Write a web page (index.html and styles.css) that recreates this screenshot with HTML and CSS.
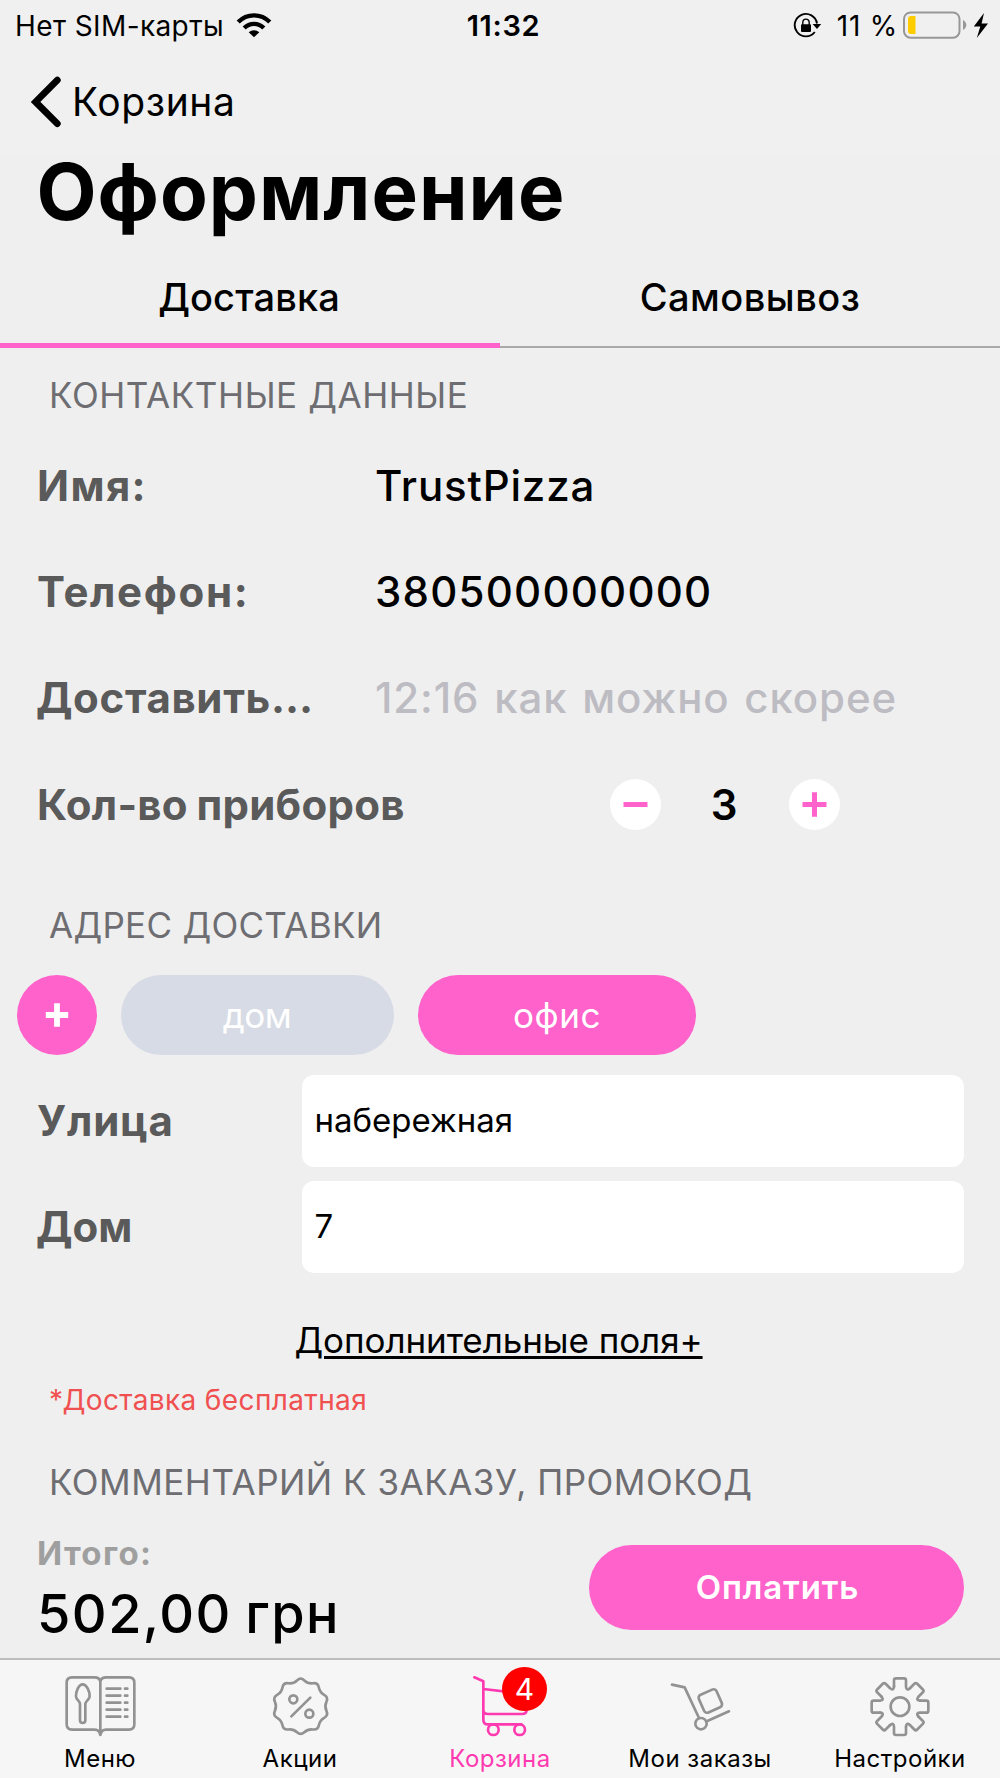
FILE: index.html
```html
<!DOCTYPE html>
<html lang="ru">
<head>
<meta charset="utf-8">
<title>Оформление</title>
<link rel="stylesheet" href="styles.css">
</head>
<body>
<div class="screen">
  <header class="top">
    <div class="status">
      <div class="status-left">
        <span class="carrier">Нет SIM-карты</span>
        <svg class="wifi" viewBox="236 11 36 26" width="36" height="26"><path d="M238.2 21A22 22 0 0 1 269.8 21M244.2 27A13.6 13.6 0 0 1 263.8 27" fill="none" stroke="#000" stroke-width="4.3"/><path d="M248.7 31.2A8 8 0 0 1 259.3 31.2L254 36.2Z"/></svg>
      </div>
      <span class="clock">11:32</span>
      <div class="status-right">
        <svg viewBox="792 11 30 26" width="30" height="26"><path d="M817 22.5A11.2 11.2 0 1 0 814.8 31" fill="none" stroke="#000" stroke-width="1.9"/><path d="M812.6 23H821.2L817 28Z"/><rect x="801" y="23.2" width="10" height="7.8" rx="1"/><path d="M802.8 24V21.5A3.2 3.4 0 0 1 809.2 21.5V24" fill="none" stroke="#000" stroke-width="1.4"/></svg>
        <span class="charge">11 %</span>
        <svg viewBox="902 9 88 30" width="88" height="30"><rect x="904" y="11.5" width="55.5" height="25.2" rx="6.5" fill="none" stroke="#979797" stroke-width="2"/><path d="M911 15H915.5V33H911Q908 33 908 30V18Q908 15 911 15Z" fill="#fc0"/><path d="M963 19Q966.3 21 966.3 24T963 29Z" fill="#979797"/><path d="M984 12L973.8 25.6H980.3L976.8 37L988 22.4H981.6Z"/></svg>
      </div>
    </div>
    <nav class="nav">
      <svg viewBox="30 74 34 56" width="34" height="56"><path d="M57.3 80.2L35.6 101.9L57.3 123.6" fill="none" stroke="#000" stroke-width="6.8" stroke-linecap="round"/></svg>
      <span class="back">Корзина</span>
    </nav>
  </header>
  <main class="content">
    <h1 class="title">Оформление</h1>
    <div class="modes">
      <div class="mode mode-active">Доставка</div>
      <div class="mode mode-pickup">Самовывоз</div>
    </div>

    <h2 class="section section-contact">КОНТАКТНЫЕ ДАННЫЕ</h2>
    <div class="row"><span class="label name">Имя:</span><span class="value trust">TrustPizza</span></div>
    <div class="row"><span class="label phone">Телефон:</span><span class="value digits">380500000000</span></div>
    <div class="row"><span class="label when">Доставить…</span><span class="value hint">12:16 как можно скорее</span></div>
    <div class="row">
      <span class="label count">Кол-во приборов</span>
      <div class="stepper">
        <svg class="step" viewBox="-25.5 -25.5 51 51"><path d="M-12 0H12" stroke="#ff62cb" stroke-width="5"/></svg>
        <span class="qty">3</span>
        <svg class="step" viewBox="-25.5 -25.5 51 51"><path d="M-12 0H12M0 -12.3V12.3" stroke="#ff62cb" stroke-width="5"/></svg>
      </div>
    </div>

    <h2 class="section section-address">АДРЕС ДОСТАВКИ</h2>
    <div class="chips">
      <div class="chip chip-add"><svg viewBox="-12 -12 24 24" width="24" height="24"><path d="M-11.2 0H11.2M0 -11.7V11.7" stroke="#fff" stroke-width="5.8"/></svg></div>
      <div class="chip chip-home">дом</div>
      <div class="chip chip-office">офис</div>
    </div>
    <div class="field"><span class="label street">Улица</span><div class="input">набережная</div></div>
    <div class="field"><span class="label house">Дом</span><div class="input">7</div></div>
    <div class="more"><a class="more-link">Дополнительные поля+</a></div>
    <p class="note">*Доставка бесплатная</p>
    <h2 class="section section-comment">КОММЕНТАРИЙ К ЗАКАЗУ, ПРОМОКОД</h2>
  </main>
  <section class="checkout">
    <div class="total"><span class="total-label">Итого:</span><span class="total-sum">502,00 грн</span></div>
    <div class="pay">Оплатить</div>
  </section>
  <footer class="tabbar">
    <div class="tab">
      <svg class="icon" viewBox="180 520 240 195"><path d="M301 545Q298 533 284 533H216Q200 533 200 549V674Q200 690 216 690H284Q298 690 301 706Q304 690 318 690H387Q403 690 403 674V549Q403 533 387 533H318Q304 533 301 545V706M248 554C236 554 228 575 228 590C228 600 240 604 240 613V662Q240 670 248 670Q256 670 256 662V613C256 604 269 600 269 590C269 575 260 554 248 554ZM320 567H361M320 588H361M320 609H361M320 630H361M320 651H361M375 567H382M375 588H382M375 609H382M375 630H382M375 651H382"/></svg>
      <span class="tab-name">Меню</span>
    </div>
    <div class="tab">
      <svg class="icon" viewBox="780 520 240 195"><path d="M891.05 542.25Q902 532 912.95 542.25Q923.9 552.5 938.8 550.65Q953.7 548.8 956.55 563.55Q959.4 578.3 972.55 585.55Q985.7 592.8 979.35 606.4Q973 620 979.35 633.6Q985.7 647.2 972.55 654.45Q959.4 661.7 956.55 676.45Q953.7 691.2 938.8 689.35Q923.9 687.5 912.95 697.75Q902 708 891.05 697.75Q880.1 687.5 865.2 689.35Q850.3 691.2 847.45 676.45Q844.6 661.7 831.45 654.45Q818.3 647.2 824.65 633.6Q831 620 824.65 606.4Q818.3 592.8 831.45 585.55Q844.6 578.3 847.45 563.55Q850.3 548.8 865.2 550.65Q880.1 552.5 891.05 542.25ZM931 594L874 650"/><circle cx="880" cy="599" r="12"/><circle cx="928" cy="642" r="12"/></svg>
      <span class="tab-name promo">Акции</span>
    </div>
    <div class="tab tab-active">
      <svg class="icon" viewBox="300 520 240 195"><path d="M343 533L370 545V660Q370 674 384 674H484M370 568L500 583V630Q500 643 486 643H384Q370 643 370 630"/><circle cx="400" cy="690" r="16"/><circle cx="479" cy="690" r="16"/></svg>
      <span class="badge">4</span>
      <span class="tab-name">Корзина</span>
    </div>
    <div class="tab">
      <svg class="icon" viewBox="60 520 240 195"><path d="M96 555L134 563L177 655M202 664L267 635"/><circle cx="183" cy="672" r="17"/><rect x="182" y="575" width="58" height="58" rx="10" transform="rotate(-24 211 604)"/></svg>
      <span class="tab-name">Мои заказы</span>
    </div>
    <div class="tab">
      <svg class="icon" viewBox="660 520 240 195"><defs><path id="tooth" d="M-18 -60V-79Q-18 -85 -12 -85H12Q18 -85 18 -79V-60Q19.1 -46.2 29.7 -55.2"/></defs><g transform="translate(780 621)"><use href="#tooth"/><use href="#tooth" transform="rotate(45)"/><use href="#tooth" transform="rotate(90)"/><use href="#tooth" transform="rotate(135)"/><use href="#tooth" transform="rotate(180)"/><use href="#tooth" transform="rotate(225)"/><use href="#tooth" transform="rotate(270)"/><use href="#tooth" transform="rotate(315)"/><circle r="28"/></g></svg>
      <span class="tab-name">Настройки</span>
    </div>
  </footer>
</div>
</body>
</html>
```
FILE: styles.css
```css
* { box-sizing: border-box; }
body { margin: 0; background: #efefef; color: #000; font-family: Inter, "Liberation Sans", sans-serif; }
h1, h2, p { margin: 0; }
svg { display: block; flex: none; }
span, .mode, .chip, .input, .pay, .section, .title { white-space: nowrap; }

.screen { width: 1000px; height: 1778px; display: flex; flex-direction: column; overflow: hidden; background: #efefef; }

.top { flex: none; background: #f0f0f0; }
.status { height: 50px; display: grid; grid-template-columns: 1fr auto 1fr; align-items: center; font-size: 28px; line-height: 34px; padding: 2px 10px 0 15px; }
.status-left, .status-right { display: flex; align-items: center; }
.carrier { letter-spacing: .4px; width: 221px; }
.wifi { margin-top: -3px; }
.clock { font-size: 29px; font-weight: 600; letter-spacing: .69px; padding-left: 2px; }
.status-right { justify-content: flex-end; }
.status-right svg { margin-top: -3px; }
.charge { letter-spacing: .78px; margin: 0 4px 0 15px; }
.nav { height: 104px; display: flex; align-items: center; padding-left: 30px; gap: 8px; }
.back { font-size: 39px; line-height: 50px; letter-spacing: .61px; }

.content { flex: none; height: 1366px; }
.title { height: 75px; line-height: 75px; font-size: 78px; font-weight: 700; letter-spacing: 1px; padding-left: 36.5px; }
.modes { display: flex; height: 97px; margin-top: 22px; }
.mode { width: 500px; font-size: 38px; font-weight: 500; line-height: 92px; text-align: center; letter-spacing: .14px; border-bottom: 2px solid #a9a9a9; }
.mode-active { border-bottom: 5px solid #ff62cb; padding-right: 2px; }
.mode-pickup { letter-spacing: .47px; }

.section { color: #6d6d72; font-size: 35px; font-weight: 400; padding-left: 49px; }
.section-contact { margin-top: 10px; line-height: 75px; letter-spacing: .58px; }
.section-address { padding: 18px 0 0 49px; line-height: 101px; height: 117px; letter-spacing: .3px; }
.section-comment { margin-top: 25px; line-height: 75px; letter-spacing: .5px; }

.row { display: flex; align-items: center; height: 106px; padding-left: 37px; font-size: 42px; line-height: 56px; }
.label { color: #5a5a5a; font-size: 42px; font-weight: 700; width: 338px; flex: none; }
.name { letter-spacing: 1.4px; }
.phone { letter-spacing: 1.65px; }
.when { letter-spacing: .66px; text-indent: -1px; }
.count { letter-spacing: .25px; word-spacing: -1.5px; width: 573px; padding-top: 2px; }
.value { font-weight: 500; }
.trust { letter-spacing: .83px; }
.digits { letter-spacing: 1.22px; }
.hint { color: #bdbcc3; letter-spacing: .9px; word-spacing: 2.7px; }
.stepper { display: flex; align-items: center; justify-content: space-between; width: 230px; }
.step { width: 51px; height: 51px; border-radius: 50%; background: #fff; }
.qty { font-weight: 600; padding: 2px 2px 0 0; }

.chips { display: flex; gap: 24px; padding-left: 17px; margin-top: 1px; }
.chip { height: 80px; border-radius: 40px; color: #fff; background: #ff62cb; font-size: 35px; line-height: 80px; display: flex; align-items: center; justify-content: center; }
.chip-add { width: 80px; }
.chip-home { width: 273px; background: #d7dbe5; letter-spacing: -.4px; padding-right: 1px; }
.chip-office { width: 278px; letter-spacing: .5px; }

.field { display: flex; align-items: center; padding-left: 37px; margin-top: 14px; }
.chips + .field { margin-top: 20px; }
.field .label { width: 265px; line-height: 56px; }
.street { letter-spacing: .8px; }
.house { text-indent: -1px; }
.input { width: 662px; height: 92px; border-radius: 12px; background: #fff; font-size: 33px; line-height: 90px; padding-left: 12.5px; }
.more { margin-top: 45px; padding-right: 3px; text-align: center; line-height: 45px; font-size: 35px; }
.more-link { letter-spacing: -.07px; text-decoration: underline; text-decoration-thickness: 2.5px; text-underline-offset: 3px; }
.note { margin-top: 17px; padding-left: 49px; font-size: 28px; line-height: 40px; letter-spacing: .37px; color: #f05050; }

.checkout { flex: none; height: 138px; display: flex; justify-content: space-between; padding: 0 36px 0 37px; }
.total { display: flex; flex-direction: column; }
.total-label { margin-top: 13px; font-size: 33px; font-weight: 700; line-height: 40px; letter-spacing: 1.34px; color: #9f9f9f; }
.total-sum { margin-top: 10px; font-size: 54px; font-weight: 500; line-height: 62px; letter-spacing: 1.45px; word-spacing: -2.5px; }
.pay { width: 375px; height: 85px; margin-top: 25px; border-radius: 43px; background: #ff62cb; color: #fff; font-size: 33px; font-weight: 600; line-height: 85px; letter-spacing: .87px; text-align: center; padding-left: 2px; }

.tabbar { flex: none; height: 120px; display: grid; grid-template-columns: repeat(5, 1fr); background: #f6f6f6; border-top: 2px solid #bdbdbd; }
.tab { position: relative; display: flex; flex-direction: column; align-items: center; padding-top: 13px; }
.icon { width: 80px; height: 65px; fill: none; stroke: #929292; stroke-width: 8; stroke-linecap: round; stroke-linejoin: round; }
.tab-active .icon { stroke: #ff3ab0; }
.tab-name { margin-top: 6px; font-size: 24px; line-height: 30px; letter-spacing: .5px; }
.tab-active .tab-name { color: #ff3ab0; }
.badge { position: absolute; left: 102px; top: 7px; width: 45px; height: 44px; border-radius: 22px; background: #f00; color: #fff; font-size: 30px; line-height: 45px; text-align: center; }
```
